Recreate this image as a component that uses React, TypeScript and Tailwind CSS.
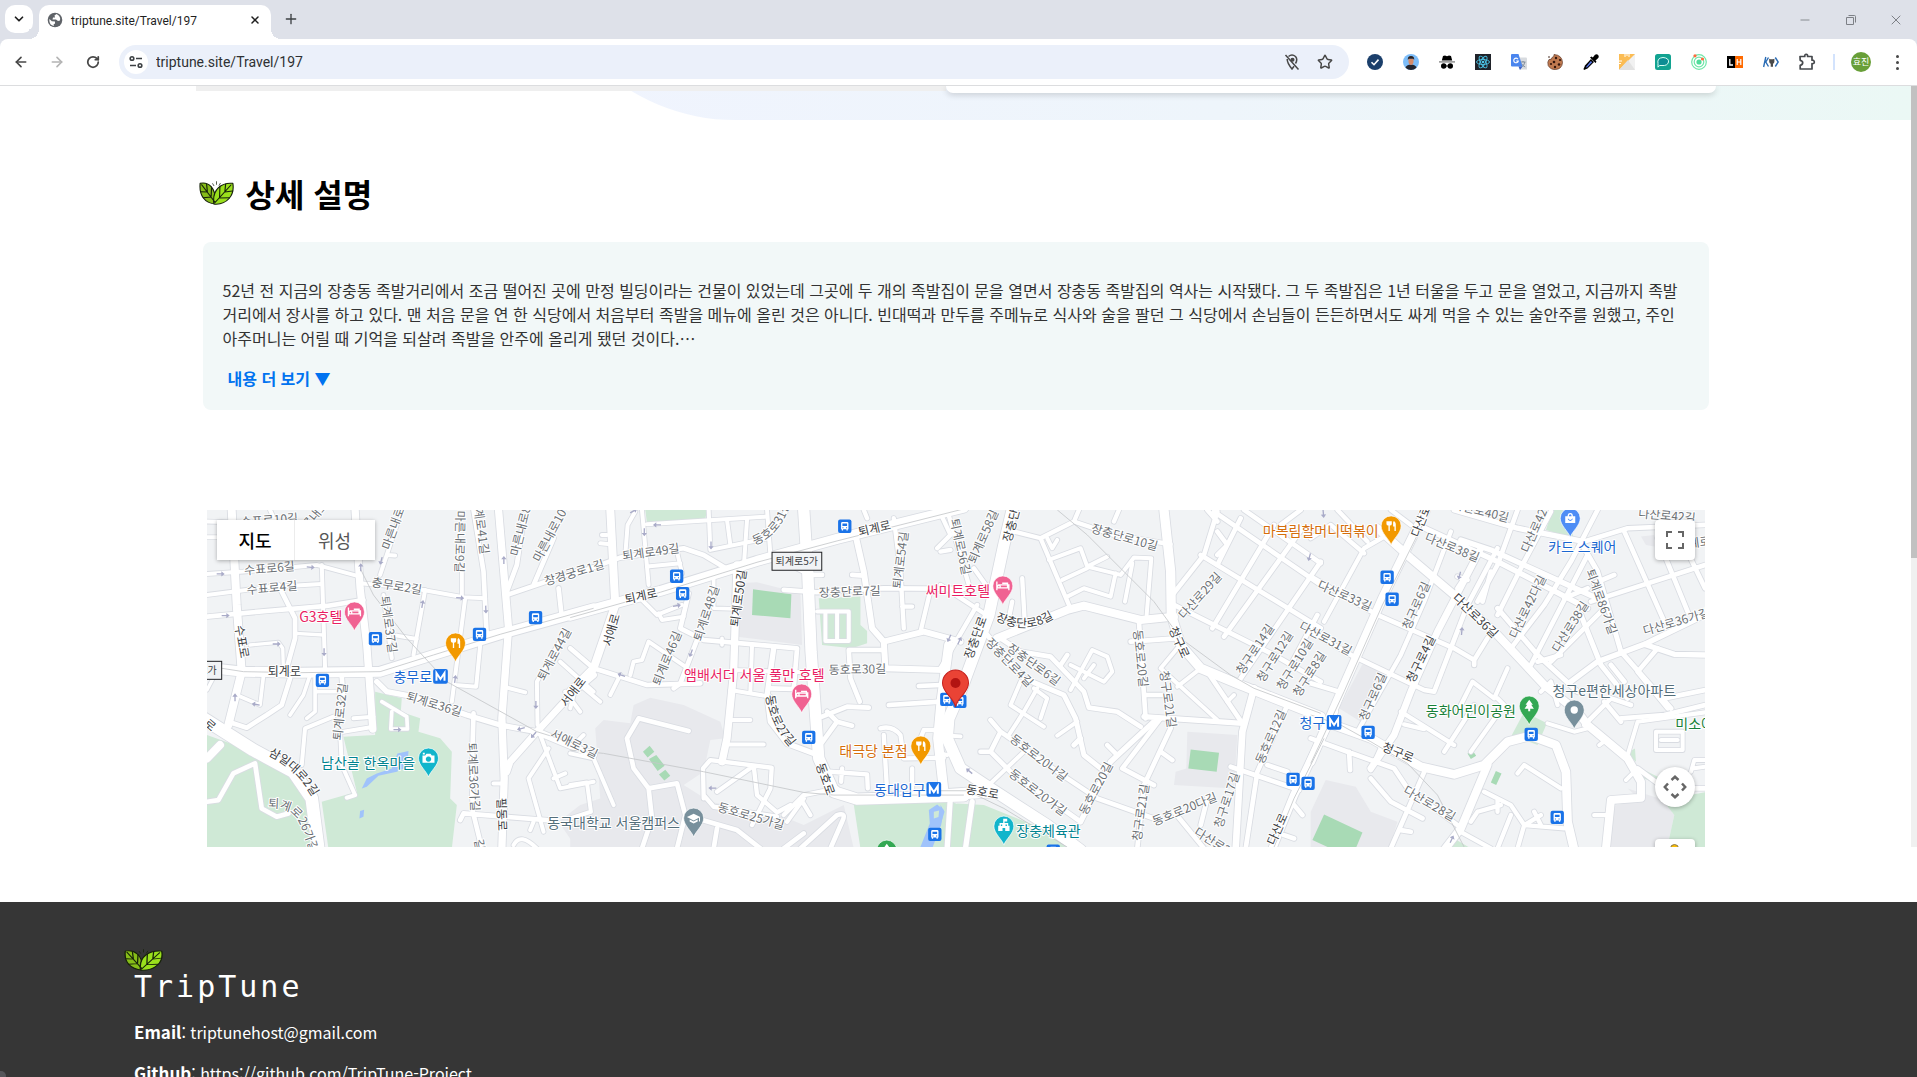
import React from "react";
import { ArrowLeft, ArrowRight, ChevronDown, Minus, Plus, RotateCw, Star, X } from "lucide-react";

const KR = "font-['Noto_Sans_CJK_KR',sans-serif]";

/* ---------- Map data: every tile has its own origin, three units per pixel ---------- */

type TileId = "a" | "b" | "c" | "d";
const OFFSET: Record<TileId, string> = {
  a: "translate(-21 -15)",
  b: "translate(1089 -15)",
  c: "translate(2199 -15)",
  d: "translate(3309 -15)",
};
const TILES: TileId[] = ["a", "b", "c", "d"];

const AREAS: Record<TileId, [string, string][]> = {
  a: [
    ["#cfe9d6", "M430,695L525,690L525,560L605,580L602,620L660,640L655,680L720,700L755,740L750,880L770,900L755,1030L385,1030L365,890L470,860Z"],
    ["#cfe9d6", "M21,690L160,740L290,810L345,900L365,1030L21,1030Z"],
    ["#a0c3fb", "M485,850L500,820L530,805L575,790L592,745L625,738L622,785L590,800L535,812L500,845Z"],
    ["#a0c3fb", "M478,940L480,918L492,914L490,935Z"],
    ["#e8e9ed", "M1075,950L1140,900L1200,880L1200,1030L1130,1030Z"],
  ],
  b: [
    ["#cfe9d6", "M225,15L410,15L405,42L230,55Z"],
    ["#e8e9ed", "M75,670L100,645L180,655L190,600L240,578L340,600L450,650L465,700L420,705L400,800L340,840L420,890L640,935L700,960L820,900L850,1030L0,1030L0,975L90,880Z"],
    ["#e8e9ed", "M505,235L560,232L690,265L695,420L500,395Z"],
    ["#a8dab5", "M548,253L663,268L660,340L545,330Z"],
    ["#cfe9d6", "M745,280L870,275L870,360L890,378L890,415L845,430L755,420Z"],
    ["#a8dab5", "M218,740L238,722L252,740L232,757ZM236,762L258,750L283,782L262,798ZM266,808L285,794L300,812L282,826Z"],
    ["#cfe9d6", "M850,898L1140,890L1170,900L1130,1030L870,1030Z"],
    ["#a0c3fb", "M1048,1030L1078,955L1075,915L1100,898L1120,915L1112,960L1085,1030ZM1090,920L1090,940L1104,936L1106,916Z"],
  ],
  c: [
    ["#e8e9ed", "M740,680L890,690L880,850L700,840L705,800L737,790Z"],
    ["#a8dab5", "M750,733L835,743L828,800L743,790Z"],
    ["#cfe9d6", "M50,895L130,900L330,980L400,1030L20,1030Z"],
    ["#a0c3fb", "M0,900L12,920L0,960Z"],
  ],
  d: [
    ["#e8e9ed", "M45,825L135,845L180,920L260,950L235,1030L0,1030L0,920Z"],
    ["#a8dab5", "M40,928L155,982L135,1030L60,1030L5,1005Z"],
    ["#e8e9ed", "M155,478L225,490L150,650L85,610Z"],
    ["#cfe9d6", "M725,15L755,15L790,100L705,75Z"],
    ["#cfe9d6", "M640,620L708,655L680,720L603,690Z"],
    ["#a8dab5", "M470,745L485,736L496,752L480,762ZM540,832L555,798L572,805L556,840Z"],
    ["#e8e9ed", "M950,850L1060,885L1090,930L1068,1030L880,1030L895,905L990,885Z"],
    ["#cfe9d6", "M1055,885L1200,858L1200,1030L1068,1030L1090,930Z"],
    ["#cfe9d6", "M945,745L972,730L975,770ZM980,785L1040,815L1035,835L1000,820ZM430,1000L480,1030L420,1030Z"],
    ["#e8e9ed", "M990,95L1030,90L1030,125L1005,120Z"],
  ],
};

const ROADS: Record<TileId, [number, string][]> = {
  a: [
    [12, "M21,207L130,200L350,180L480,215M480,235L640,250L790,277L855,280"],
    [12, "M21,270L200,247L365,237"],
    [14, "M21,335L200,318L380,303L490,285"],
    [12, "M21,50L90,52M21,97L100,97M210,15L230,60"],
    [10, "M150,420L235,412L248,430L250,490M285,385L370,390M21,555L60,480"],
    [12, "M365,180L375,490"],
    [14, "M235,240L285,340L285,400L260,490M270,520L245,600L200,630L140,668L85,650"],
    [11, "M190,515L180,600L110,570M345,520L345,620L320,640M345,560L420,560M330,510L310,570L270,630"],
    [12, "M305,780L315,670L400,635M460,640L520,635M420,680L425,780L465,870L440,878M430,680L520,665"],
    [14, "M425,515L430,580"],
    [11, "M545,590L620,635L622,672L572,672L575,620"],
    [12, "M675,255L640,450M590,392L650,402M560,150L585,152M540,210L590,60"],
    [12, "M550,270L575,460"],
    [12, "M795,280L755,590M840,420L828,545L765,540"],
    [12, "M785,200L785,275"],
    [14, "M820,15L850,200L860,400M860,388L920,372"],
    [14, "M915,272L1140,195M920,260L950,180L970,40M1000,240L1060,100M1075,250L1085,340"],
    [12, "M1095,380L1010,530L1012,660M910,545L975,562M1080,470L1180,560"],
    [12, "M1045,730L985,820L1030,980M1020,690L1080,850L1180,830M1060,820L1095,805M1095,560L1140,620"],
    [14, "M820,625L815,800L818,920L845,1030M780,945L790,925L1040,945"],
    [12, "M880,835L915,835M990,975L1000,950M940,1020Q960,980 1010,1030"],
    [14, "M21,890L55,885L100,805L165,775L185,910L230,935L265,925"],
    [16, "M530,530L560,560L640,575L800,630L900,660L1010,680"],
    [20, "M1180,510L1120,560L1010,680L930,770L920,800M1010,680L1180,750"],
    [24, "M95,15L110,300L125,500L85,660M21,760L60,720"],
    [22, "M465,15L480,250L500,420L518,672"],
    [22, "M895,15L925,370L905,640L912,820L905,1030"],
    [30, "M21,488L130,500L300,503L540,500L700,450L900,388L1180,310"],
    [38, "M10,640L160,735L280,800L335,880L355,1035"],
  ],
  b: [
    [12, "M215,15L235,240M165,150L172,60L195,20M230,58L590,35M90,115L120,118M95,90L110,90"],
    [14, "M0,212L150,158L340,130L400,150L470,192"],
    [12, "M415,15L420,135L590,100L650,15M470,45L480,120M530,45L520,190M590,15L600,150"],
    [12, "M320,140L335,205M230,185L330,175"],
    [12, "M205,275L260,330L335,300M265,325L275,345L340,335"],
    [14, "M355,265L330,370L400,405L680,430L670,552L600,550"],
    [11, "M430,200L430,310L490,312M455,400L455,420"],
    [14, "M380,405L330,535L310,550"],
    [14, "M0,430L70,490L230,540L390,535"],
    [12, "M180,510L190,470L215,465L235,410L345,485M150,510L120,570M0,610L10,570M70,490L30,540L90,590"],
    [12, "M545,420L540,560M480,555L600,575M490,495L700,502M480,645L540,645M470,718L580,718"],
    [16, "M610,430L590,570L600,650L650,715L730,745"],
    [14, "M660,180L720,210L755,210M640,255L740,262L940,250L1180,252"],
    [14, "M835,435L940,435M835,435L840,520L868,590M845,210L880,212"],
    [12, "M740,320L835,320L835,408L765,408L765,325M800,325L800,405"],
    [13, "M880,15L890,40M970,40L990,200L1000,370M1080,255L1050,380M1105,15L1140,90L1100,130M995,305L1025,305"],
    [14, "M755,635L830,605L895,608M755,712L800,650L845,662M770,620L800,650"],
    [14, "M955,600L1110,590M1045,543L1110,540"],
    [13, "M930,670Q965,660 990,690L1000,760L1120,758M940,690L950,860M780,800L890,808L892,850M1025,790L1025,850M1050,700L1060,675L1120,675M815,790L812,830"],
    [14, "M355,678L205,640L170,700L190,790L235,850L320,835L345,930L320,1030M235,850L245,940L215,1030"],
    [13, "M800,850L700,870L640,930M400,880L398,790L420,765L604,788L600,850L545,960M440,860L550,782L560,870L620,922L660,900M400,870L430,905L620,935M690,880L720,930M650,950L700,880"],
    [12, "M0,745L70,760L130,900M0,840L50,832L62,920L0,940M20,710L40,690"],
    [14, "M380,940L500,975L570,1030M440,970L430,1030M690,1030L800,930Q830,920 815,950L780,1030M640,1030L700,985"],
    [18, "M855,90L880,200L905,370L940,410L1060,380L1170,410M940,410L945,490L1120,495"],
    [24, "M120,15L135,300L70,490L0,560"],
    [22, "M500,180L490,500L470,700L455,770"],
    [28, "M1135,420L1112,590L1102,700L1120,860"],
    [30, "M0,332L270,258L560,168L800,102L1180,8"],
    [34, "M700,15L712,200L722,440L745,760L790,860L860,882L1180,872"],
  ],
  c: [
    [13, "M220,80L300,100L385,300M300,100L400,50L520,90L690,118M400,50L415,15M520,50L535,15"],
    [12, "M320,100L335,130L350,105M325,165L420,130L440,185L540,210L580,158L632,160L618,330M365,225L440,190M380,275L430,250L510,275L525,205M575,175L553,290M440,185L500,155"],
    [14, "M695,270L790,150L830,20M800,15L830,50"],
    [15, "M140,390L250,520L370,570L405,640L430,750L480,790M420,700L400,720"],
    [14, "M180,400L240,440L330,455L430,560L445,608L530,620L600,665M360,480L380,450"],
    [12, "M390,555L455,435L500,455L515,500L490,530L390,480M430,520L460,480"],
    [14, "M595,350L615,640M570,410L705,400M610,570L665,570"],
    [12, "M710,430L660,490L830,645M710,545L780,490M860,590L880,570"],
    [14, "M800,500L905,655"],
    [14, "M660,640L545,790L640,840M660,740L695,765M500,720L530,750M690,670L610,840L590,1030"],
    [14, "M1040,600L950,800L915,1030M870,785L1075,855M980,780L1040,800M1060,900L1085,930M1030,990L1060,1000"],
    [14, "M150,645L180,680L150,740L210,800L420,950M120,740L150,740M180,680L380,820L470,880L640,940"],
    [12, "M150,835L250,740M240,530L210,600L310,665M280,550L320,580L300,640M250,620L205,690M410,650L350,692M290,550L250,620"],
    [14, "M700,920L790,1030M780,960L800,880"],
    [13, "M0,240L130,325M100,190L150,260M110,300L0,490M20,15L85,240M0,140L30,135M245,220L252,340M215,290L205,340M0,580L20,520"],
    [12, "M30,692L60,694M0,745L20,750"],
    [16, "M30,870L20,1030M95,890L75,1030"],
    [14, "M820,20L1140,240M780,150L1140,370M700,300L1000,450L1140,530M910,15L1140,175"],
    [14, "M1000,60L815,370M1085,70L850,395M1140,170L900,520M900,40L830,180M830,80L860,120L830,150M1130,330L1050,480M1020,60L1080,15"],
    [16, "M610,635L905,655M650,640L510,770L420,950"],
    [20, "M940,550L905,680L885,1030"],
    [24, "M170,400L380,315L430,302L600,345L700,335"],
    [24, "M1180,620L1060,870L995,1030"],
    [28, "M670,15L690,200L692,330L720,420L780,490L900,540L1140,635"],
    [34, "M215,15L190,120L145,330L60,560L25,640L20,700L60,790L150,850L320,960L420,1035M0,870L150,860"],
  ],
  d: [
    [14, "M0,215L200,330L430,430L490,465L530,400M490,465L490,480"],
    [14, "M0,380L130,455L340,555L370,560L470,300L560,130M0,535L85,560"],
    [13, "M420,80L340,290L270,450L140,680M0,100L60,60L160,145M80,15L170,110M240,15L300,60M40,350L160,130L230,90"],
    [16, "M320,60L560,170L830,310M430,15L620,70L820,110M450,105L540,135L870,285"],
    [14, "M720,20L640,170L560,330M620,15L560,180L500,290M540,200L515,290M440,215L470,225M440,250L480,190"],
    [14, "M860,15L780,170L700,300L600,430M830,150L660,480M850,235L910,210M870,320L720,470M760,280L830,250"],
    [14, "M820,110L950,70L1182,60M940,80L1060,350M1040,100L1130,320M840,290L1182,180M1100,80L1182,250"],
    [15, "M820,130L860,200L930,440L1080,610M810,330L870,480L950,580M560,310L680,450L800,560M900,480L940,530"],
    [14, "M680,470L750,450M1040,430L980,500L1070,610M880,590L930,650M820,660L900,580L960,600M930,640L1060,630L1182,600M1060,580L1182,555"],
    [12, "M710,655L790,680L830,670M950,750L980,650L1182,622M1035,680L1115,680L1115,735L1035,735ZM1050,705L1100,705M1140,800L1150,765L1182,765M1145,790L1182,785M865,720L885,705M945,825L965,805"],
    [13, "M590,490L550,580L485,530L440,620M560,580L580,600L480,740M490,600L400,740M270,620L430,720M280,658L340,672"],
    [14, "M345,790L240,1030M0,700L110,740L250,790L290,850L440,960M180,820L240,890L335,940M115,740L118,795M210,730L180,795M270,975L300,980"],
    [13, "M620,805L640,780L750,850M520,860L600,900L640,960L760,970M500,920L570,900M600,930L560,1030M690,930L640,960L620,1030M440,975L540,1030M850,930L890,930M690,560L720,530L740,600M500,920L480,950M670,920L690,960M560,880L560,920"],
    [14, "M980,790L1060,850L1182,850"],
    [16, "M780,530L860,470L1000,418L1182,330M1000,418L1090,448L1182,450"],
    [20, "M510,130L380,380L300,560L250,690L180,790"],
    [24, "M200,70L300,160L430,270L560,390L700,540L800,620L830,660L950,760L990,830L990,878L900,885L885,1030"],
    [24, "M530,780L450,970L400,1035"],
    [26, "M345,15L215,280L100,540L0,770"],
    [26, "M0,635L180,700L330,785L430,808L520,780L590,710L660,692L735,720L765,800L770,950L790,1035"],
  ],
};

const RAILS: Record<TileId, string> = {
  a: "M66,490L130,500L300,503L540,500L700,450L900,388L1180,310M480,190L520,270L620,400L740,530L1010,680L1140,720",
  b: "M0,338L270,262L560,172L800,108L1180,12M0,735L100,745L400,800L700,862L790,870L1180,870",
  c: "M0,857L80,857L190,910L380,1026M350,15L440,90L640,290L720,400L870,510L940,550L1140,625M1150,700L1060,880L1000,1026",
  d: "M335,60L215,300L100,560L0,775M0,630L90,660L180,710L290,775L380,870L460,1026",
};

// [x, y, rotation, text, darker]
type Label = [number, number, number, string, boolean?];
const LABELS: Record<TileId, Label[]> = {
  a: [
    [208, 45, -4, "수표로10길"], [345, 30, -50, "른내로"], [588, 45, -70, "마른내로9길"], [779, 110, 91, "마른내로9길"], [842, 62, 82, "퇴계로41길"],
    [965, 62, -76, "마른내로8길"], [1056, 77, -62, "마른내로10길"], [208, 190, -5, "수표로6길"], [216, 248, -5, "수표로4길"],
    [590, 243, 9, "충무로2길"], [566, 358, 82, "퇴계로37길"], [126, 410, 80, "수표로", true], [253, 501, 0, "퇴계로", true],
    [420, 620, -84, "퇴계로32길"], [702, 597, 17, "퇴계로36길"], [1062, 448, -62, "퇴계로44길"], [1118, 560, -52, "서애로", true],
    [820, 815, 87, "퇴계로36가길"], [905, 928, 88, "필동로", true],
    [1122, 716, 26, "서애로3길"], [838, 1018, 80, "길"], [30, 660, 40, "로", true],
  ],
  b: [
    [12, 203, -17, "창경궁로1길"], [242, 141, -8, "퇴계로49길"], [212, 273, -12, "퇴계로", true],
    [912, 70, -13, "퇴계로", true], [408, 325, -72, "퇴계로48길"], [504, 280, -82, "퇴계로50길", true], [123, 375, -74, "서애로", true],
    [290, 460, -68, "퇴계로46길"], [990, 165, -83, "퇴계로54길"], [838, 260, -2, "장충단로7길"], [861, 493, -1, "동호로30길"],
    [765, 822, 70, "동호로", true], [542, 933, 16, "동호로25가길"],
  ],
  c: [
    [60, 125, 78, "퇴계로56길"], [128, 95, -66, "퇴계로58길"], [212, 62, -75, "장충단", true], [552, 97, 16, "장충단로10길"],
    [105, 398, -70, "장충단로", true], [280, 478, 36, "장충단로6길"], [207, 472, 46, "장충단로4길"],
    [600, 460, 84, "동호로20길"], [716, 412, 66, "청구로", true], [778, 272, -48, "다산로29길"], [682, 582, 82, "청구로21길"],
    [943, 433, -56, "청구로14길"], [1002, 455, -58, "청구로12길"], [1062, 478, -58, "청구로10길"], [1106, 507, -58, "청구로8길"],
    [990, 695, -66, "동호로12길"], [295, 758, 37, "동호로20나길"], [292, 862, 37, "동호로20가길"], [466, 850, -62, "동호로20길"],
    [126, 860, 10, "동호로", true], [600, 922, -82, "청구로21길"], [732, 912, -22, "동호로20다길"], [858, 885, -72, "청구로17길"],
    [1010, 972, -66, "다산로", true], [838, 1022, 32, "다산로24길"],
  ],
  d: [
    [330, 48, -68, "다산로", true], [424, 127, 22, "다산로38길"], [676, 62, -66, "다산로42길"], [510, 18, 14, "다산로40길"],
    [102, 272, 24, "다산로33길"], [316, 302, -66, "청구로6길"], [494, 332, 44, "다산로36길", true], [650, 305, -64, "다산로42다길"],
    [778, 365, -58, "다산로38길"], [872, 290, 70, "퇴계로86가길"], [1068, 32, 5, "다산로42길"], [1165, 112, -8, "계로"],
    [1096, 350, -16, "다산로36가길"], [45, 400, 28, "다산로31길"], [330, 462, -64, "청구로4길", true],
    [186, 575, -66, "청구로6길"], [262, 742, 22, "청구로", true], [356, 895, 30, "다산로28길"],
  ],
};

// Labels that bend along their road: [id, tile, path, text, darker]
const CURVED: [string, TileId, string, string, boolean][] = [
  ["road-samil", "a", "M204,750Q290,790 342,885", "삼일대로2길", true],
  ["road-toegye26", "a", "M204,908Q275,905 298,955T335,1060", "퇴계로26가길", false],
  ["road-dongho27", "b", "M587,572Q595,660 668,735", "동호로27길", true],
  ["road-dongho31", "b", "M553,120Q640,90 662,-20", "동호로31길", false],
  ["road-jangchung8", "c", "M164,345Q260,395 346,335", "장충단로8길", true],
];

const BUSES: Record<TileId, [number, number][]> = {
  a: [[526, 401], [367, 526], [838, 388], [1006, 338]],
  b: [[319, 214], [337, 266], [823, 64], [715, 697], [1093, 988]],
  c: [[19, 583], [58, 589], [1057, 823], [1102, 835], [338, 1038]],
  d: [[229, 217], [244, 283], [172, 682], [661, 688], [739, 937]],
};

const METROS: Record<TileId, [number, number, string, number][]> = {
  a: [[721, 514, "충무로", 638]],
  b: [[1090, 853, "동대입구", 988]],
  c: [],
  d: [[70, 652, "청구", 5]],
};

type Glyph = "bed" | "food" | "camera" | "school" | "tree" | "bag" | "hall" | "dot";
// [pin x, pin y, pin colour, glyph, text, text x, text y, text colour]
type Poi = [number, number, string, Glyph, string, number, number, string];
const POIS: Record<TileId, Poi[]> = {
  a: [
    [463, 321, "#f06292", "bed", "G3호텔", 362, 336, "#e91e63"],
    [766, 414, "#f29900", "food", "", 0, 0, "#d56e0c"],
    [685, 759, "#12b5cb", "camera", "남산골 한옥마을", 504, 774, "#00838f"],
  ],
  b: [
    [694, 567, "#f06292", "bed", "앰배서더 서울 풀만 호텔", 552, 510, "#e91e63"],
    [1051, 723, "#f29900", "food", "태극당 본점", 909, 738, "#d56e0c"],
    [370, 939, "#78909c", "school", "동국대학교 서울캠퍼스", 130, 954, "#546e7a"],
    [949, 1035, "#34a853", "tree", "", 0, 0, "#188038"],
  ],
  c: [
    [187, 243, "#f06292", "bed", "써미트호텔", 52, 258, "#e91e63"],
    [190, 963, "#12b5cb", "hall", "장충체육관", 324, 978, "#00838f"],
  ],
  d: [
    [241, 63, "#f29900", "food", "마복림할머니떡볶이", 30, 78, "#d56e0c"],
    [778, 40, "#4e8df5", "bag", "카드 스퀘어", 814, 126, "#1a66d0"],
    [655, 603, "#34a853", "tree", "동화어린이공원", 480, 618, "#188038"],
    [790, 615, "#78909c", "dot", "청구e편한세상아파트", 910, 558, "#546e7a"],
    [1240, 700, "#34a853", "tree", "미소어린이공원", 1228, 658, "#188038"],
  ],
};

// [x, y, rotation]
const ARROWS: Record<TileId, [number, number, number][]> = {
  a: [[62, 207, 0], [332, 187, 5], [77, 332, 0], [230, 417, 0], [372, 442, 90], [105, 577, -90], [167, 598, 190], [482, 187, -90], [543, 168, 105], [780, 279, 5], [857, 314, 88], [667, 297, -80], [911, 165, -90], [765, 522, -82], [962, 671, 165], [1000, 690, 130], [1007, 600, 90], [592, 674, 0]],
  b: [[222, 82, 90], [260, 60, 180], [422, 122, 90], [320, 302, -10], [362, 445, 110], [153, 510, 200], [426, 849, 180], [190, 18, -30]],
  c: [[57, 407, -65], [26, 400, 115], [86, 798, 220], [1106, 157, 105]],
  d: [[446, 212, 105], [38, 27, 85], [453, 378, -85], [423, 1002, -65]],
};

function PinGlyph({ kind }: { kind: Glyph }) {
  switch (kind) {
    case "bed":
      return <path d="M-18,-13V13M-18,6H18M18,13V-3H-14M-12,-2a4,4 0 1 0 .1,0M-2,-8H14V4" fill="none" stroke="#fff" strokeWidth="4" />;
    case "food":
      return <path d="M-14,-14V-6Q-14,-1 -8,-1V15H-4V-1Q2,-1 2,-6V-14ZM8,-15Q15,-12 14,-1V15H10V2H6V-10Z" fill="#fff" />;
    case "camera":
      return <path fillRule="evenodd" d="M-18,-8H-10L-6,-13H6L10,-8H18V14H-18ZM0,-5a8,8 0 1 0 .1,0ZM-17,-16h6v5h-6Z" fill="#fff" />;
    case "school":
      return <path d="M0,-13L20,-3L0,7L-20,-3ZM-12,4L0,10L12,4V10L0,16L-12,10ZM16,-2H19V10H16Z" fill="#fff" />;
    case "tree":
      return <path d="M0,-19L11,-4H6L14,8H3V16H-3V8H-14L-6,-4H-11Z" fill="#fff" />;
    case "bag":
      return <path fillRule="evenodd" d="M-15,-6H-8Q-8,-16 0,-16Q8,-16 8,-6H15V14H-15ZM-4,-6H4Q4,-12 0,-12Q-4,-12 -4,-6ZM-7,0Q0,10 7,0V4Q0,12 -7,4Z" fill="#fff" />;
    case "hall":
      return <path fillRule="evenodd" d="M-2,-22H10V-14H2V-9H13V-1H17V15H-17V-1H-13V-9H-2ZM-4,15H4V6H-4ZM-9,-5V0H-5V-5ZM5,-5V0H9V-5Z" fill="#fff" />;
    default:
      return <circle r="11" fill="#fff" />;
  }
}

function MapDrawing() {
  return (
    <svg viewBox="0 0 4491 1011" preserveAspectRatio="xMidYMid slice" className={`block h-[337px] w-full bg-[#f1f3f5] ${KR}`} role="img" aria-label="지도">
      {TILES.map((t) => (
        <g key={t} transform={OFFSET[t]}>
          {AREAS[t].map(([fill, d], i) => <path key={i} d={d} fill={fill} fillRule="evenodd" />)}
        </g>
      ))}
      {["#d9dce2", "#ffffff"].map((color, pass) =>
        TILES.map((t) => (
          <g key={color + t} transform={OFFSET[t]} fill="none" stroke={color} strokeLinecap="round" strokeLinejoin="round">
            {ROADS[t].map(([w, d], i) => <path key={i} d={d} strokeWidth={pass === 0 ? w + 5 : w} />)}
          </g>
        ))
      )}
      {TILES.map((t) => (
        <g key={t} transform={OFFSET[t]}>
          <path d={RAILS[t]} fill="none" stroke="#c4c6c9" strokeWidth="2.5" />
          {ARROWS[t].map(([x, y, r], i) => (
            <path key={i} transform={`translate(${x} ${y}) rotate(${r})`} d="M-12,-2H2V-8L12,0L2,8V2H-12Z" fill="#a9abc8" />
          ))}
        </g>
      ))}
      {TILES.map((t) => (
        <g key={t} transform={OFFSET[t]} textAnchor="middle" stroke="#fff" strokeWidth="6" strokeLinejoin="round" paintOrder="stroke">
          {LABELS[t].map(([x, y, r, text, dark], i) => (
            <text key={i} transform={`translate(${x} ${y}) rotate(${r})`} y="13" fontSize="36" fill={dark ? "#3c4043" : "#6b7075"}>{text}</text>
          ))}
        </g>
      ))}
      {CURVED.map(([id, t, d, text, dark]) => (
        <g key={id} transform={OFFSET[t]} stroke="#fff" strokeWidth="6" strokeLinejoin="round" paintOrder="stroke">
          <defs><path id={id} d={d} /></defs>
          <text fontSize="36" fill={dark ? "#3c4043" : "#6b7075"}><textPath href={`#${id}`}>{text}</textPath></text>
        </g>
      ))}
      <g transform={OFFSET.b}>
        <rect x="605" y="142" width="149" height="54" fill="#f1f3f5" stroke="#202124" strokeWidth="3" />
        <text x="679" y="179" textAnchor="middle" fontSize="30" fill="#3c4043">퇴계로5가</text>
      </g>
      <g transform={OFFSET.a}>
        <rect x="-40" y="469" width="105" height="54" fill="#f1f3f5" stroke="#202124" strokeWidth="3" />
        <text x="50" y="506" textAnchor="end" fontSize="30" fill="#3c4043">2가</text>
      </g>
      {TILES.map((t) => (
        <g key={t} transform={OFFSET[t]}>
          {BUSES[t].map(([x, y], i) => (
            <g key={i} transform={`translate(${x} ${y})`}>
              <rect x="-20" y="-20" width="40" height="40" rx="6" fill="#1a73e8" />
              <path fillRule="evenodd" fill="#fff" d="M-11,-9Q-11,-13 -7,-13H7Q11,-13 11,-9V9H9V13H5V9H-5V13H-9V9H-11ZM-7,-8V-1H7V-8ZM-7,3V6H-4V3ZM4,3V6H7V3Z" />
            </g>
          ))}
          {METROS[t].map(([x, y, text, tx], i) => (
            <g key={i}>
              <text x={tx} y={y + 16} textAnchor="middle" fontSize="42" fill="#1967d2" stroke="#fff" strokeWidth="6" paintOrder="stroke">{text}</text>
              <rect x={x - 22} y={y - 22} width="44" height="44" rx="6" fill="#1a73e8" />
              <path d={`M${x - 12},${y + 13}V${y - 10}L${x},${y + 8}L${x + 12},${y - 10}V${y + 13}`} fill="none" stroke="#fff" strokeWidth="6" />
            </g>
          ))}
          {POIS[t].map(([x, y, fill, kind, text, tx, ty, color], i) => (
            <g key={i}>
              {text && <text x={tx} y={ty + 15} textAnchor="middle" fontSize="42" fill={color} stroke="#fff" strokeWidth="6" strokeLinejoin="round" paintOrder="stroke">{text}</text>}
              <g transform={`translate(${x} ${y})`}>
                <path d="M0,57C-5,40 -30,22 -30,0A30,30 0 0 1 30,0C30,22 5,40 0,57Z" fill={fill} stroke="#fff" strokeWidth="2" />
                <PinGlyph kind={kind} />
              </g>
            </g>
          ))}
        </g>
      ))}
      <g transform={`${OFFSET.c} translate(45 534)`}>
        <path d="M0,72C-4,45 -39,30 -39,0A39,39 0 0 1 39,0C39,30 4,45 0,72Z" fill="#ea4335" stroke="#c5221f" strokeWidth="3" />
        <circle r="15" fill="#b31412" />
      </g>
    </svg>
  );
}

/* ---------- Small drawings ---------- */

function Leaf({ className }: { className: string }) {
  return (
    <svg viewBox="0 0 92 72" preserveAspectRatio="none" className={className} aria-hidden="true">
      <g stroke="#16210a" strokeWidth="3" strokeLinejoin="round" strokeLinecap="round">
        <path d="M3 7C22 2 46 16 43 69C14 66 0 42 3 7Z" fill="#86bd18" />
        <path d="M89 7C60 4 34 24 39 69C74 73 94 42 89 7Z" fill="#9ae01c" />
        <path d="M7 11L42 64M20 10L22 32M33 18L32 46M6 32L22 33M11 50L32 48M84 12L41 66M70 9L68 32M55 16L54 50M88 30L68 33M80 50L54 51" fill="none" />
        <path d="M36 8L39 14M46 2V10M56 7L53 13" fill="none" strokeWidth="2" />
      </g>
    </svg>
  );
}

function ExtIcon({ name }: { name: string }) {
  const p = { viewBox: "0 0 16 16", className: "size-4", "aria-hidden": true } as const;
  switch (name) {
    case "Check":
      return <svg {...p}><circle cx="8" cy="8" r="8" fill="#1b3f6b" /><path d="M4.5 8.2L7 10.7L11.5 5.6" fill="none" stroke="#fff" strokeWidth="1.6" /></svg>;
    case "Profile helper":
      return <svg {...p}><circle cx="8" cy="8" r="8" fill="#7dbdf9" /><path d="M2.5 13.8Q4 10.5 8 10.5T13.5 13.8Q11 16 8 16T2.5 13.8Z" fill="#23252f" /><path d="M5.5 5H10.5V8Q10 11 8 11T5.5 8Z" fill="#d88b69" /><path d="M4.8 6Q4.5 2 8 2T11.2 6L10.3 4.8H5.7Z" fill="#2b211f" /></svg>;
    case "Incognito tool":
      return <svg {...p}><path d="M4 2L6 1.5L8 2.3L10 1.5L12 2L13.2 6.5H2.8Z" fill="#000" /><path d="M0 7.2H16V8.6H0Z" fill="#888" /><circle cx="4.7" cy="12" r="2.7" /><circle cx="11.3" cy="12" r="2.7" /><path d="M6.5 11.5H9.5V12.5H6.5Z" /></svg>;
    case "React":
      return <svg {...p}><rect width="16" height="16" fill="#20232a" /><g fill="none" stroke="#4cc5e8" strokeWidth="0.9"><ellipse cx="8" cy="8" rx="6.5" ry="2.5" /><ellipse cx="8" cy="8" rx="6.5" ry="2.5" transform="rotate(60 8 8)" /><ellipse cx="8" cy="8" rx="6.5" ry="2.5" transform="rotate(120 8 8)" /></g><circle cx="8" cy="8" r="1.3" fill="#4cc5e8" /></svg>;
    case "Translate":
      return <svg {...p}><path d="M6 3.5H15Q16 3.5 16 4.5V15.5H8.5Z" fill="#d8dbdf" /><path d="M9.5 8H14.5M12 7V8M10.5 13Q13.5 11.5 13.8 8M10.5 9.5Q11.5 12 14.2 13" stroke="#7b8794" strokeWidth="0.9" fill="none" /><path d="M1 0H7.5L11.5 12.5H1Q0 12.5 0 11.5V1Q0 0 1 0Z" fill="#4a85ee" /><path d="M7.5 12.5H11.5L9 16Z" fill="#3a62c9" /><path d="M7 5.2A2.3 2.3 0 1 0 7.3 7H5.2" fill="none" stroke="#fff" strokeWidth="1.1" /></svg>;
    case "Cookie":
      return <svg {...p}><path d="M7 .5Q7.5 3 5 3.5Q5 6 2 5.5Q0 8 1.2 11.5Q3.5 15.8 8.5 15.5Q15 15 15.5 8.5Q15 1 7 .5Z" fill="#c07a50" stroke="#5a3120" strokeWidth="0.7" /><g fill="#33170d"><circle cx="9" cy="4" r="1.2" /><circle cx="13" cy="6" r="1.1" /><circle cx="7" cy="8" r="1.3" /><circle cx="12" cy="10.5" r="1.3" /><circle cx="4" cy="10" r="1.1" /><circle cx="8" cy="13" r="1.2" /><circle cx="2" cy="3" r=".8" /></g></svg>;
    case "Colour picker":
      return <svg {...p}><path d="M8 5L11 8L4.5 14.5L1 16L0.5 15L2 11.5Z" fill="#000" /><path d="M7.8 7L9.2 8.3L4 13.5L2.8 13.3Z" fill="#5b79ea" /><path d="M7 3.5L8.5 2.5L9.8 3.5L12 .8Q14 -.3 15.3 1.3Q16.3 3 15 4.3L12.5 6.5L13.5 7.7L12.5 9Z" fill="#000" /></svg>;
    case "Notes":
      return <svg {...p}><rect width="16" height="16" fill="#f1f1f1" /><path d="M0 0H16L0 16Z" fill="#fbbc54" /><path d="M0 16L9 6L16 16Z" fill="#e2e2e2" /><path d="M6 0V3M8 0V2M10 0V3M0 7H3M0 9.5H2" stroke="#fff" /></svg>;
    case "Chat":
      return <svg {...p}><rect width="16" height="16" rx="2.5" fill="#12a391" /><path d="M4.5 11.5L3 13.2V9.5Q1.8 4 8 3.5Q14 4 13.5 8Q12.5 12 7 11.5Z" fill="#0c8d93" stroke="#d9fff5" strokeWidth="1" /></svg>;
    case "Orbit":
      return <svg {...p}><g fill="none" stroke="#6fe6a8" strokeWidth="1.2"><circle cx="8" cy="8" r="7.3" /><circle cx="8" cy="8" r="4.8" /></g><circle cx="8" cy="8" r="2.6" fill="#4fdc9a" /><circle cx="4" cy="1.8" r="1.6" fill="#ff6b3d" /><circle cx="11.5" cy="5" r="1.6" fill="#ff6b3d" /></svg>;
    case "Lighthouse":
      return <svg {...p}><path d="M0 2H8V14H0Z" fill="#000" /><path d="M8 2H16V14H8Z" fill="#ff6a00" /><path d="M2.8 5V11H6" fill="none" stroke="#fff" strokeWidth="1.3" /><path d="M10.2 5V11M13.8 5V11M10.2 8H13.8" stroke="#fff" strokeWidth="1.2" /></svg>;
    case "Git code":
      return <svg {...p}><path d="M2.8 3L.6 13M5.5 3.5L2.8 8L5.5 12.500M12.300 3.500L15.200 8L12.300 12.500" fill="none" stroke="#2a6cb5" strokeWidth="1.4" /><path d="M6.200 4.800L7.500 5.200H10L11.400 4.800V7.500Q11.400 9.300 10 9.700V12.800H7.700V9.700Q6.200 9.300 6.200 7.500Z" fill="#4a4a4a" /></svg>;
    default:
      return <svg viewBox="0 0 16 16" className="size-4 overflow-visible" aria-hidden="true"><path d="M1 2.5H5.8Q5.5 .3 7.2 .3T8.6 2.5H13V6.200Q15.300 6 15.300 8T13 9.700V15H1.200V11.300Q3.700 10.800 3.700 8.800T1.200 6.300Z" fill="none" stroke="#46494d" strokeWidth="1.7" strokeLinejoin="round" /></svg>;
  }
}

const EXTENSIONS = ["Check", "Profile helper", "Incognito tool", "React", "Translate", "Cookie", "Colour picker", "Notes", "Chat", "Orbit", "Lighthouse", "Git code", "Extensions"];

/* ---------- Browser frame ---------- */

function TabStrip() {
  return (
    <div className="flex h-[39px] shrink-0 items-end bg-[#dee1e9]">
      <button aria-label="Search tabs" className="mb-1.5 ml-[5px] flex size-7 items-center justify-center rounded-[10px] bg-white text-[#1f1f1f]">
        <ChevronDown className="size-3.5" strokeWidth={3} />
      </button>
      <div className="relative ml-1.5 flex h-[34px] w-[232px] items-center rounded-t-[10px] bg-white pl-2 pr-2">
        <span className="absolute -left-2.5 bottom-0 size-2.5 bg-[radial-gradient(circle_at_0_0,#dee1e9_10px,#fff_10px)]" />
        <span className="absolute -right-2.5 bottom-0 size-2.5 bg-[radial-gradient(circle_at_100%_0,#dee1e9_10px,#fff_10px)]" />
        <svg viewBox="0 0 16 16" className="mb-1 size-4" aria-hidden="true">
          <circle cx="8" cy="8" r="7.3" fill="#5f6368" />
          <path d="M2.5 7L4.8 9.2L8 9.5V11.5L6.5 12.5L7 14Q2.3 13.3 2.3 8ZM9.5 2L7.5 3.5L8 5.5H6L5.5 7.5H9L11 9L13 8.5Q14 4 9.5 2Z" fill="#fff" />
        </svg>
        <span className="mb-0.5 ml-2 flex-1 text-xs text-[#1f1f1f]">triptune.site/Travel/197</span>
        <button aria-label="Close tab" className="mb-1 flex size-4 items-center justify-center text-[#1f1f1f]"><X className="size-3" strokeWidth={3} /></button>
      </div>
      <button aria-label="New tab" className="mb-3 ml-3 flex size-4 items-center justify-center text-[#3c4043]"><Plus className="size-4" /></button>
      <div className="ml-auto flex h-full items-center text-[#7d8086]">
        <button aria-label="Minimize" className="flex w-[46px] justify-center"><Minus className="size-3.5" strokeWidth={1.5} /></button>
        <button aria-label="Restore" className="flex w-[46px] justify-center">
          <svg viewBox="0 0 10 10" className="size-2.5" fill="none" stroke="currentColor" aria-hidden="true"><path d="M.5 2.5H7.5V9.5H.5ZM2.500 .5H8.500Q9.500 .5 9.500 1.500V7.500" /></svg>
        </button>
        <button aria-label="Close" className="flex w-[43px] justify-center"><X className="size-4" strokeWidth={1.5} /></button>
      </div>
    </div>
  );
}

function Toolbar() {
  return (
    <div className="flex h-[47px] shrink-0 items-center rounded-t-lg border-b border-[#dcdddf] bg-white pl-[3px] pr-0.5 text-[#474747]">
      <button aria-label="Back" className="flex w-9 justify-center"><ArrowLeft className="size-4" strokeWidth={2.5} /></button>
      <button aria-label="Forward" className="flex w-9 justify-center text-[#b4b4b4]"><ArrowRight className="size-4" strokeWidth={2.5} /></button>
      <button aria-label="Reload" className="flex w-9 justify-center"><RotateCw className="size-3.5" strokeWidth={3} /></button>
      <div className="ml-2 mr-2 flex h-[34px] flex-1 items-center rounded-full bg-[#ebf0fa] pl-[5px] pr-4">
        <button aria-label="Site information" className="flex size-6 items-center justify-center rounded-full bg-white">
          <svg viewBox="0 0 14 14" className="size-3.5" fill="none" stroke="#3c4043" strokeWidth="1.6" aria-hidden="true">
            <circle cx="3" cy="3.5" r="1.8" /><path d="M7 3.5H13M1 10.5H7" /><circle cx="11" cy="10.5" r="1.8" />
          </svg>
        </button>
        <input aria-label="Address" readOnly value="triptune.site/Travel/197" className="ml-2 min-w-0 flex-1 bg-transparent text-sm text-[#2e3033] outline-none" />
        <button aria-label="Location blocked" className="mr-[17px]">
          <svg viewBox="0 0 16 16" className="size-4" fill="none" stroke="#474747" strokeWidth="1.5" aria-hidden="true">
            <path d="M4.5 2.5Q8 -.5 11.5 2.5Q14 5.5 11.5 9.5M3.2 5Q3 9 8 15L10 12.2M1.5 1L14.5 15.5" /><circle cx="8.5" cy="5.8" r="1.3" fill="#474747" />
          </svg>
        </button>
        <button aria-label="Bookmark"><Star className="size-4" strokeWidth={2.2} /></button>
      </div>
      {EXTENSIONS.map((name) => (
        <button key={name} aria-label={name} className="flex w-9 justify-center"><ExtIcon name={name} /></button>
      ))}
      <span className="ml-2 h-4 w-0.5 bg-[#d3e3fd]" />
      <button aria-label="Profile" className={`ml-4 size-5 rounded-full bg-[#689f38] text-[9px] leading-5 text-white ${KR}`}>효진</button>
      <button aria-label="Menu" className="ml-2 flex w-9 flex-col items-center gap-[3px]">
        <span className="size-[3px] rounded-full bg-[#474747]" /><span className="size-[3px] rounded-full bg-[#474747]" /><span className="size-[3px] rounded-full bg-[#474747]" />
      </button>
    </div>
  );
}

/* ---------- Page ---------- */

function Hero() {
  return (
    <div className="relative h-[34px] overflow-hidden bg-white">
      <div className="absolute bottom-0 left-[28%] right-0 h-[220px] rounded-bl-[200px] bg-linear-to-r from-[#f0f4fe] via-[#eef5fb] to-[#ebf8f5]" />
      <div className="absolute inset-x-0 top-0 mx-auto flex max-w-[1520px] items-start justify-between">
        <div className="h-[5px] w-[750px] bg-[#efefef]" />
        <div className="h-[7px] w-[770px] rounded-b-[10px] bg-white shadow-[0_2px_6px_rgba(0,0,0,0.16)]" />
      </div>
    </div>
  );
}

function TravelMap() {
  return (
    <div className="relative mx-3 mt-[100px] h-[337px] overflow-hidden">
      <MapDrawing />
      <div className="absolute left-2.5 top-2.5 flex h-10 bg-white text-lg shadow-[0_1px_4px_rgba(0,0,0,0.3)]">
        <button className="w-[78px] border-r border-[#ececec] font-medium text-black">지도</button>
        <button className="w-20 text-[#565656]">위성</button>
      </div>
      <button aria-label="전체 화면" className="absolute right-2.5 top-2.5 flex size-10 items-center justify-center rounded-sm bg-white shadow-[0_1px_4px_rgba(0,0,0,0.3)]">
        <svg viewBox="0 0 18 18" className="size-[18px]" fill="none" stroke="#666" strokeWidth="2" aria-hidden="true"><path d="M1 6V1H6M12 1H17V6M17 12V17H12M6 17H1V12" /></svg>
      </button>
      <button aria-label="지도 카메라 컨트롤" className="absolute bottom-10 right-2.5 flex size-10 items-center justify-center rounded-full bg-white shadow-[0_1px_4px_rgba(0,0,0,0.3)]">
        <svg viewBox="0 0 24 24" className="size-6" fill="none" stroke="#666" strokeWidth="2.5" aria-hidden="true"><path d="M8.5 5L12 1.8L15.5 5M8.5 19L12 22.2L15.5 19M5 8.5L1.8 12L5 15.5M19 8.5L22.2 12L19 15.5" /></svg>
      </button>
      <button aria-label="스트리트 뷰" className="absolute -bottom-8 right-2.5 flex size-10 justify-center rounded-sm bg-white pt-[5px] shadow-[0_1px_4px_rgba(0,0,0,0.3)]">
        <span className="size-[9px] rounded-full border border-[#8a7a4a] bg-[#fbbc04]" />
      </button>
    </div>
  );
}

export default function App() {
  return (
    <div lang="ko" className="relative flex h-screen flex-col overflow-hidden bg-white">
      <header className="shrink-0 bg-[#dee1e9] font-['Roboto',sans-serif]">
        <TabStrip />
        <Toolbar />
      </header>
      <div className={`flex shrink-0 ${KR}`}>
        <main className="min-w-0 flex-1">
          <Hero />
          <div className="mx-auto max-w-[1522px]">
            <h2 className="ml-1 mt-[49px] flex h-12 items-center gap-3 text-[32px] font-bold leading-[48px] text-black">
              <Leaf className="h-6 w-[35px]" />
              상세 설명
            </h2>
            <section className="mx-2 mt-[25px] rounded-lg bg-[#f2f8f8] px-5 pb-5 pt-9">
              <p className="text-base leading-6 text-[#333]">
                52년 전 지금의 장충동 족발거리에서 조금 떨어진 곳에 만정 빌딩이라는 건물이 있었는데 그곳에 두 개의 족발집이 문을 열면서 장충동 족발집의 역사는 시작됐다. 그 두 족발집은 1년 터울을 두고 문을 열었고, 지금까지 족발거리에서 장사를 하고 있다. 맨 처음 문을 연 한 식당에서 처음부터 족발을 메뉴에 올린 것은 아니다. 빈대떡과 만두를 주메뉴로 식사와 술을 팔던 그 식당에서 손님들이 든든하면서도 싸게 먹을 수 있는 술안주를 원했고, 주인아주머니는 어릴 때 기억을 되살려 족발을 안주에 올리게 됐던 것이다.…
              </p>
              <button className="mt-4 block px-[5px] text-base font-bold leading-6 text-[#0073f0]">내용 더 보기 ▼</button>
            </section>
            <TravelMap />
          </div>
        </main>
        <div className="w-1.5 bg-[#f0f0f0]"><div className="h-[62%] bg-[#c1c1c1]" /></div>
      </div>
      <footer className={`mt-[55px] min-h-[175px] shrink-0 bg-[#363636] pl-[134px] pt-[47px] text-base leading-6 text-white ${KR}`}>
        <Leaf className="-ml-2.5 h-[22px] w-[39px]" />
        <div className="font-['DejaVu_Sans_Mono',monospace] text-3xl leading-8 tracking-widest">TripTune</div>
        <p className="mt-[17px]"><b className="text-[17px]">Email</b>: triptunehost@gmail.com</p>
        <p className="mt-[17px]"><b className="text-[17px]">Github</b>: <a href="https://github.com/TripTune-Project">https://github.com/TripTune-Project</a></p>
      </footer>
      <span className="absolute -bottom-1 -left-1 size-2.5 rounded-full bg-[#55565a]" />
    </div>
  );
}
